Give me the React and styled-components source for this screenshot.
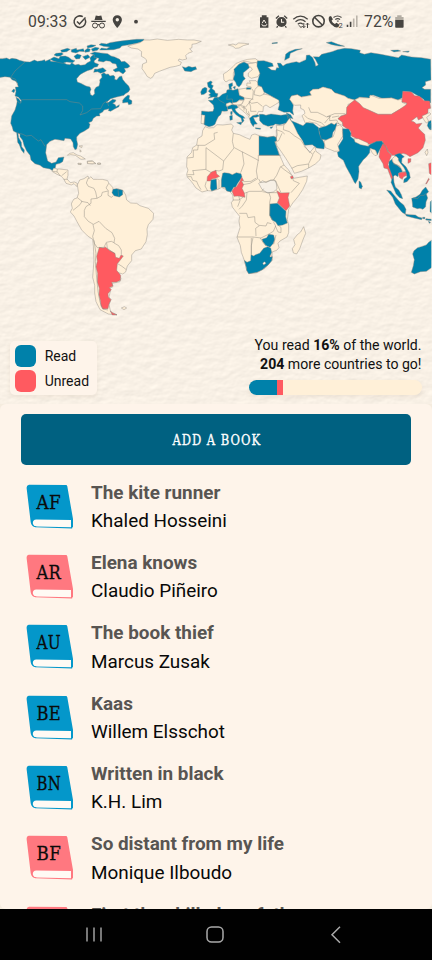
import React from "react";
import styled, { createGlobalStyle } from "styled-components";

const Global = createGlobalStyle`
  * { box-sizing: border-box; }
  html, body { margin: 0; padding: 0; background: #fef4ea; overflow: hidden; }
  body { font-family: Roboto, "Liberation Sans", sans-serif; color: #111; }
`;

const BLUE = "#0081aa";
const RED = "#ff5a60";
const LAND = "#fff0d8";

const Screen = styled.div`
  width: 432px;
  height: 960px;
  display: flex;
  flex-direction: column;
  overflow: hidden;
  background: #f5ecdf;
`;

const Hero = styled.section`
  display: grid;
  grid-template: 404px / 432px;
  flex: none;
  background: #f8f0e5;
`;

const MapSvg = styled.svg`
  grid-area: 1 / 1;
  display: block;
`;

const HeroContent = styled.div`
  grid-area: 1 / 1;
  z-index: 1;
  display: flex;
  flex-direction: column;
  justify-content: space-between;
`;

const StatusBar = styled.header`
  display: flex;
  justify-content: space-between;
  align-items: center;
  height: 44px;
  padding: 0 28px;
  color: #464440;
`;

const StatusSide = styled.div`
  display: flex;
  align-items: center;
`;

const StatusText = styled.span`
  width: ${(p) => p.$w}px;
  font-size: 15.8px;
  line-height: 20px;
  white-space: nowrap;
`;

const HeroFooter = styled.div`
  display: flex;
  justify-content: space-between;
  align-items: flex-end;
  padding: 0 10.5px 9px 10px;
`;

const Legend = styled.div`
  width: 87px;
  height: 54px;
  padding: 4px 4.7px;
  display: flex;
  flex-direction: column;
  gap: 3.6px;
  border-radius: 5px;
  background: #fef4ea;
  box-shadow: 0 2px 5px rgba(120, 90, 50, 0.09);
`;

const LegendItem = styled.div`
  display: flex;
  align-items: center;
  gap: 8.6px;
  font-size: 14px;
  line-height: 21.6px;
`;

const LegendLabel = styled.span`
  padding-top: 1px;
  height: 21.6px;
`;

const Swatch = styled.i`
  width: 21.4px;
  height: 21.6px;
  border-radius: 6px;
  background: ${(p) => p.$color};
`;

const Progress = styled.div`
  text-align: right;
  font-size: 14.1px;
  line-height: 19px;
  white-space: nowrap;
`;

const Track = styled.div`
  display: flex;
  width: 172.6px;
  height: 15px;
  margin: 6.5px 0 0 auto;
  border-radius: 8px;
  overflow: hidden;
  background: ${LAND};
  box-shadow: 0 2px 5px rgba(120, 90, 50, 0.09);
`;

const Segment = styled.div`
  width: ${(p) => p.$w}px;
  background: ${(p) => p.$color};
`;

const Panel = styled.main`
  height: 505px;
  flex: none;
  padding: 10px 21px 0;
  overflow: hidden;
  border-radius: 6px;
  background: #fef4ea;
`;

const AddButton = styled.button`
  display: flex;
  align-items: center;
  justify-content: center;
  width: 390px;
  height: 51px;
  padding: 0;
  border: 0;
  border-radius: 5px;
  background: #006181;
`;

const List = styled.ul`
  margin: 12.5px 0 0;
  padding: 0;
  list-style: none;
`;

const Row = styled.li`
  display: flex;
  gap: 17px;
  height: 70.35px;
  padding: 6px 0 0 5px;
`;

const RowText = styled.div`
  display: flex;
  flex-direction: column;
  font-size: 18.9px;
  line-height: 28.4px;
  margin-top: -4.8px;
  white-space: nowrap;
`;

const Title = styled.strong`
  font-weight: 700;
  color: #585552;
`;

const Author = styled.span`
  color: #080808;
`;

const NavBar = styled.nav`
  display: flex;
  justify-content: space-between;
  align-items: center;
  height: 51px;
  flex: none;
  padding: 0 87px 0 85px;
  background: #010101;
`;

const slab = '"DejaVu Serif", "Liberation Serif", serif';

/* Every tile of the map is digitised at three units per pixel from its own origin. */
const tiles = [
  {
    at: [0, 36],
    shapes: [
      [BLUE, "M-5 68L8 68L20 66L28 70L36 67L50 69L58 73L75 77L90 78L103 72L112 76L125 74L134 71L136 76L150 70L152 76L165 77L175 75L188 79L200 85L210 86L215 80L225 87L235 85L242 88L255 86L262 80L272 75L270 66L275 60L285 54L288 60L290 68L282 75L284 80L296 85L292 92L283 94L276 100L262 104L250 110L240 116L230 128L232 138L242 142L258 150L270 153L273 160L270 168L272 176L278 179L284 173L283 162L288 154L297 150L300 138L299 132L306 124L304 115L312 110L318 115L325 114L330 120L340 118L345 122L344 130L350 132L358 122L365 120L368 130L376 140L386 150L390 160L386 167L375 174L372 178L350 183L332 188L318 200L326 199L338 190L348 192L345 198L338 202L346 206L348 212L358 206L357 212L345 218L332 226L325 224L327 218L312 222L308 228L298 233L300 240L290 240L280 247L276 256L266 260L270 265L267 276L252 286L240 292L230 303L230 312L233 325L230 339L225 341L220 332L219 320L212 309L195 307L192 314L180 312L165 310L150 316L140 326L137 350L143 375L155 382L168 378L175 365L192 363L188 377L180 382L168 385L166 395L159 405L150 399L130 395L120 388L105 383L93 372L90 358L80 345L72 328L68 313L60 302L60 295L54 292L56 305L64 319L65 332L73 342L72 352L64 342L58 326L53 319L50 290L40 285L36 271L32 262L35 240L45 222L50 205L52 193L61 201L64 194L56 184L45 180L48 166L46 153L55 153L52 141L46 135L36 131L30 124L15 122L-5 125Z"],
      [BLUE, "M150 70L162 63L177 68L180 61L196 60L206 64L215 71L225 74L218 80L200 78L188 82L174 79L162 76Z"],
      [BLUE, "M162 57L168 52L185 50L190 54L181 60L170 61ZM182 43L202 37L211 40L200 47L185 49ZM214 41L229 37L231 42L250 38L254 47L239 46L228 51L214 48ZM222 61L232 54L244 58L239 68L228 69ZM255 43L263 37L271 40L268 47L255 49ZM248 62L264 56L270 64L256 71ZM261 30L273 26L288 28L279 33L263 36ZM274 39L286 34L298 36L292 43L278 46Z"],
      [BLUE, "M432 10L410 10L380 13L355 16L330 20L320 24L304 22L297 26L310 31L329 33L320 38L304 36L299 42L315 42L341 41L360 36L365 30L382 27L410 22L430 16Z"],
      [BLUE, "M271 53L284 48L302 51L323 53L333 60L344 63L359 70L364 77L374 76L385 85L390 91L383 96L373 97L377 106L369 114L357 106L346 108L339 102L352 95L348 84L337 82L330 76L318 74L310 78L294 75L297 67L282 64L284 57ZM292 100L309 95L319 104L312 109L302 112L293 107L281 109L284 99Z"],
      [BLUE, "M368 193L374 185L384 177L389 179L387 189L396 194L395 204L386 206L383 199L368 201ZM35 166L41 159L45 162L42 170ZM48 184L56 188L64 199L59 202L51 194Z"],
      [LAND, "M202 358L208 352L220 350L231 357L242 360L256 369L243 370L226 358L212 356ZM262 375L276 374L287 382L277 384L262 382ZM234 382l10 1l-1 3l-8 -2ZM293 382h9v3h-9ZM237 330l10 -1l-2 6ZM240 341l4 5l-4 2Z"],
    ],
    borders: "M76 77L45 105L32 124L47 130L53 148M64 191H200L210 197L238 201L248 210L248 224L240 237L260 230L275 219L302 218L310 202L321 195L326 210M51 291L66 294L79 300L94 298L106 308L115 315L123 311L135 331",
  },
  {
    at: [144, 36],
    shapes: [
      [LAND, "M-49 30L-30 25L-12 20L0 12L18 12L40 9L70 13L104 10L130 12L150 12L172 16L156 23L144 25L144 35L137 38L145 47L132 52L125 59L128 69L115 72L105 69L103 74L112 79L109 87L95 91L78 94L62 100L46 106L32 112L27 122L20 127L10 122L2 109L-6 98L-4 84L8 79L7 71L0 65L-8 61L-7 47L-18 39L-38 36Z"],
      [LAND, "M253 27L267 24L275 27L284 21L302 22L315 24L298 29L285 36L274 37L267 31Z"],
      [BLUE, "M115 92L125 95L134 91L144 94L155 92L158 100L149 103L141 107L122 105L119 99Z"],
      [BLUE, "M190 140L200 135L205 138L201 145L208 149L204 158L212 164L214 171L222 173L219 183L207 183L192 187L200 180L194 177L200 172L193 166L199 158L192 152ZM175 158L183 154L189 157L188 169L180 175L172 176L170 168Z"],
      [LAND, "M238 114L248 108L259 99L268 91L275 83L291 76L311 70L334 68L345 76L339 81L323 80L311 77L299 77L285 85L275 99L268 111L268 133L255 132L246 138L240 132Z"],
      [LAND, "M311 83L325 82L337 79L343 89L346 102L348 112L342 122L322 127L313 121L313 111L325 101L321 94L313 91Z"],
      [BLUE, "M268 130L272 115L270 100L285 85L300 78L312 84L316 95L307 103L298 110L298 120L304 128L297 134L292 145L285 153L278 148L275 139Z"],
      [BLUE, "M254 145L265 140L266 149L261 153L264 160L256 160ZM267 154L274 151L273 160ZM384 21L400 19L400 22L384 23Z"],
      [BLUE, "M193 193L206 193L212 184L225 184L235 175L247 170L249 162L258 160L267 163L282 158L286 177L300 183L301 191L286 191L280 197L265 204L250 203L246 209L250 214L251 225L240 226L234 225L230 236L223 242L218 252L213 265L206 269L195 272L182 267L178 262L182 240L172 236L173 225L193 227L207 226L210 217L208 207Z"],
      [LAND, "M173 236L183 238L180 264L171 262Z"],
      [LAND, "M246 203L258 199L268 205L260 211L247 210ZM264 200L277 199L286 193L299 194L293 206L278 207L266 205Z"],
      [LAND, "M284 160L310 156L321 158L322 153L308 150L309 141L320 142L316 134L336 134L342 141L342 150L355 152L363 163L359 174L378 178L388 184L404 188L406 198L395 205L378 215L366 207L358 212L357 227L344 226L339 235L329 239L326 248L318 253L314 240L300 228L286 216L280 211L294 204L301 190L300 184L286 178Z"],
      [BLUE, "M308 155L320 155L320 160L307 160Z"],
      [BLUE, "M250 212L263 206L278 208L282 215L273 219L276 226L286 235L298 241L303 247L297 246L300 254L295 260L291 246L277 237L266 225L263 218L251 220ZM278 260L294 258L291 266ZM257 240L265 238L265 251L258 253ZM260 227L265 226L264 236L260 235Z"],
      [BLUE, "M317 247L326 239L341 236L347 240L337 244L328 244L333 255L340 264L331 265L328 272L320 260ZM334 275L350 277L349 280L335 278ZM378 274L387 272L381 278Z"],
      [BLUE, "M346 235L357 235L366 238L381 234L397 236L411 238L430 235L439 244L440 260L425 262L407 266L394 264L388 268L372 271L357 265L347 254Z"],
    ],
    borders: "M285 177L300 186L318 188L328 190M323 158L328 165L326 188L316 196M343 150L333 160L330 176L348 180L361 174M315 196L323 202L340 199L355 211M283 211L292 208L304 214L319 196M292 212L307 219L307 229L315 237M315 197L320 212L320 226L337 226M300 209L300 224M313 226L317 240M220 185L226 193L242 202M250 178L248 190L265 189L266 201M182 241L182 264",
  },
  {
    at: [288, 36],
    shapes: [
      [BLUE, "M-92 75L-72 74L-47 82L-44 91L-61 94L-49 102L-37 103L-34 95L-27 96L-32 81L-22 82L-15 90L-6 84L10 80L25 77L34 80L54 71L55 58L64 57L74 65L81 80L83 91L91 87L82 70L76 62L93 63L101 55L132 47L148 41L170 37L190 38L217 43L215 50L229 55L249 50L278 55L300 59L331 65L341 57L370 63L400 65L428 70L429 132L412 137L413 147L402 155L410 160L428 160L428 200L421 199L415 205L407 190L395 182L370 168L346 166L343 185L330 192L310 185L285 188L255 177L244 180L248 187L215 183L200 192L180 187L170 180L140 170L130 160L105 153L92 159L75 160L65 168L70 178L40 183L28 176L10 180L5 190L12 200L16 208L14 224L17 237L5 228L-12 229L-30 221L-26 207L-27 193L-54 178L-72 168L-79 152L-90 148L-91 136L-84 112L-93 91Z"],
      [BLUE, "M115 20L130 17L150 25L170 31L152 30L132 26ZM308 43L330 42L338 45L318 48ZM344 47L364 45L361 49ZM-10 73L-7 55L3 47L22 40L43 38L27 43L7 52L4 65ZM-6 230L8 236L15 248L6 245Z"],
      [LAND, "M5 190L10 180L28 176L40 183L70 178L65 168L75 160L92 159L105 153L130 160L140 170L170 180L180 187L200 192L196 201L180 205L180 226L175 235L158 240L150 248L164 254L165 269L150 262L140 268L130 262L120 268L109 274L96 270L85 262L65 258L52 262L47 250L42 239L51 232L48 222L38 217L38 207L20 208L14 202Z"],
      [LAND, "M200 191L215 185L244 186L247 177L273 187L310 186L330 192L343 189L342 199L356 205L348 215L334 221L310 235L270 235L240 222L222 215L214 203Z"],
      [RED, "M344 166L370 168L380 179L395 181L408 194L425 195L428 217L420 219L420 230L408 244L391 252L387 242L370 255L379 258L385 264L402 262L391 276L399 285L410 295L412 313L405 335L390 350L366 362L355 355L345 352L330 358L312 358L300 345L294 330L289 329L283 316L265 318L245 325L220 319L202 306L190 300L188 285L177 278L165 270L163 259L150 248L158 241L175 235L176 214L187 202L200 192L215 203L226 215L240 221L270 235L310 235L335 220L355 206L356 201L342 198ZM360 368L369 368L368 378L360 382Z"],
      [BLUE, "M-3 238L10 254L28 262L45 269L55 260L75 262L92 275L94 292L110 325L108 339L86 336L73 326L50 328L38 315L23 305L16 287L16 275L3 258Z"],
      [BLUE, "M92 277L104 273L115 270L130 262L139 266L146 260L145 275L135 289L132 304L115 312L100 310L95 295Z"],
      [LAND, "M108 315L135 303L142 283L144 271L155 267L165 275L163 286L165 299L149 325L155 345L140 346L112 335Z"],
      [BLUE, "M164 278L182 279L189 292L188 302L198 310L213 316L223 322L241 330L247 325L266 316L281 315L287 323L276 340L268 356L264 345L246 337L245 350L235 363L226 371L212 391L213 407L210 429L202 443L198 437L188 417L175 394L166 373L151 362L148 349L155 345L151 331L165 309Z"],
      [LAND, "M198 308L211 308L240 321L241 331L218 326L201 318ZM246 337L262 342L268 357L261 359L253 351Z"],
      [RED, "M284 323L294 330L299 346L311 358L306 369L300 386L309 402L316 422L315 437L309 426L299 399L288 396L285 383L273 363L276 342Z"],
      [LAND, "M402 240L425 230L429 234L416 244L422 256L415 261L408 252ZM418 339L420 350L416 359L411 349Z"],
      [BLUE, "M421 257L430 253L432 276L424 280L418 269ZM426 263h8v18h-8Z"],
    ],
    borders: "M-2 262L12 288L22 309M50 238L59 247L77 253L100 260L110 270M62 214L68 229L88 229L105 237L116 243L128 240L120 249L110 261M117 242L140 233L172 233M125 240L125 254L146 252L152 264M132 244L153 240M283 324L295 335L301 349",
  },
  {
    at: [40, 160],
    shapes: [
      [LAND, "M36 34L41 24L52 27L59 27L84 30L84 46L81 57L91 68L103 66L112 70L111 80L102 71L94 75L78 70L72 58L64 49L51 43Z"],
      [LAND, "M112 75L119 60L132 56L144 48L147 56L152 50L160 58L172 58L187 58L203 62L207 70L218 82L219 89L234 87L249 91L257 105L260 120L272 129L290 130L300 137L325 145L341 160L339 178L325 194L321 207L322 224L318 245L304 267L286 272L275 285L275 302L262 318L257 336L248 342L235 338L243 355L240 365L216 370L219 380L206 387L211 394L207 411L213 419L207 434L212 455L231 465L205 462L180 449L168 425L164 399L164 376L158 352L162 300L160 258L158 238L143 228L125 210L111 185L102 168L91 156L97 145L94 132L97 125L102 117L111 114L116 100Z"],
      [RED, "M178 262L190 264L196 261L208 271L225 280L227 292L238 295L243 285L250 288L241 300L232 311L230 331L242 346L241 361L230 366L215 367L219 378L208 383L214 389L204 401L205 411L213 419L207 432L204 446L189 447L183 438L181 421L177 405L178 385L172 366L173 340L168 320L172 304L170 289ZM211 453L218 459L231 464L217 465Z"],
      [BLUE, "M219 88L230 86L248 91L248 104L238 111L222 107L216 98Z"],
      [LAND, "M244 444l9 -4l7 4l-8 5ZM114 10h9v3h-9ZM142 5l16 -1l9 7l-24 0ZM173 9h8v3h-8Z"],
    ],
    borders: "M145 54L139 69L145 79L162 85L167 96L171 115L153 117L153 130L138 140L133 151L133 170L145 184L160 193L177 184L197 205L216 218L224 235L222 249L236 257L244 270L244 284M112 113L126 124L120 134L108 144L99 151M124 124L144 128L151 137M206 70L198 84L205 92L204 106L214 112L219 108M204 93L187 97L184 108L171 115M234 88L236 108M159 193L163 212L158 229L163 250L172 263L192 262L199 247L214 244L222 248M200 249L202 265L224 281M162 241L168 281L166 305L169 343L174 394L180 426L188 447L204 450M233 311L246 319L259 329M39 34L52 36L61 48M52 27L51 36M65 47L80 35M71 58L82 58",
  },
  {
    at: [180, 120],
    shapes: [
      [LAND, "M290 26L289 16L304 17L316 12L328 -5L340 12L353 40L368 62L374 77L389 98L405 79L408 94L423 105L420 119L406 132L386 144L364 154L343 160L337 147L318 116L308 101L291 77L286 61L292 45Z"],
      [LAND, "M75 20L86 24L101 23L111 14L129 15L154 12L160 18L155 30L160 40L178 44L195 52L210 58L215 45L225 42L240 48L262 52L280 49L288 52L290 62L284 62L291 84L299 106L305 119L312 135L325 149L335 165L340 175L358 172L382 168L380 184L368 209L354 230L339 248L326 268L324 284L322 299L326 315L326 338L321 351L300 363L294 370L297 383L290 391L276 396L277 420L255 445L230 458L207 461L200 451L193 421L184 397L181 377L171 352L180 323L177 303L179 289L166 273L157 261L154 248L160 240L158 225L150 215L125 202L114 208L95 213L82 212L66 216L48 204L36 187L22 171L20 163L24 150L20 140L21 111L34 98L38 83L50 75L53 56L66 48L68 32Z"],
      ["#f7f0e5", "M236 190L248 182L258 188L272 180L288 183L291 207L280 216L262 219L246 208Z"],
      [BLUE, "M237 48L262 52L280 49L288 52L290 62L284 65L298 106L237 106Z"],
      [RED, "M81 183L82 170L94 156L108 151L110 162L119 169L107 175L95 177L92 183Z"],
      [BLUE, "M93 180L109 177L111 207L95 213L91 205Z"],
      [BLUE, "M124 201L124 180L128 160L133 158L147 160L157 164L169 158L183 161L186 171L180 180L173 190L167 201L161 202L153 216L140 213L135 202Z"],
      [RED, "M185 171L191 182L185 183L191 194L186 205L193 219L195 232L175 228L162 229L156 213L164 202L170 200L180 184Z"],
      [RED, "M290 212L302 219L328 218L324 232L329 258L318 272L292 248L298 234Z"],
      [BLUE, "M270 252L292 250L318 274L317 290L322 309L308 315L294 317L287 306L276 300L269 286Z"],
      [BLUE, "M246 358L260 353L266 343L281 345L284 358L280 370L270 382L257 376L249 365Z"],
      [BLUE, "M193 421L201 427L212 422L213 404L221 408L227 404L239 400L251 385L263 380L272 384L275 397L270 409L277 410L275 422L265 434L247 449L231 457L206 461L200 451L199 442Z"],
      ["#fff7ec", "M248 429L254 425L258 430L251 435ZM270 406h4v5h-4Z"],
      [RED, "M331 170L338 167L340 174L334 177Z"],
      [LAND, "M371 320L377 340L369 359L359 387L350 402L340 399L337 386L345 374L341 358L352 344L362 336Z"],
    ],
    borders: "M50 76H75L104 58L102 40L113 37M160 40L157 64L162 84L131 123L78 83V148L39 152M55 76L53 90H40V112L22 114M131 123L128 149L117 153L106 151M163 83L187 96L192 132L182 158M186 95L235 121V105M235 120L229 153L233 176L210 190L188 194M190 185L213 184L229 174M237 106H302M236 177L242 188L259 185L281 179L290 166L301 141L312 135M302 140L313 149L334 164M282 178L290 190L303 218M333 218L358 190L340 182L338 174M77 148L94 158M38 150L42 164H22M23 170H34L38 181L50 184L55 196L63 209M79 184L75 198L83 213M111 175L117 181V207M193 220L209 214H245L251 206M247 215L266 218H292M267 219L272 233L269 247L269 286L278 300M176 228L180 242L173 260M158 240H177L190 231M201 217L199 240L187 258L177 268M178 280H200L204 293L224 290L225 307L238 317L227 325L228 348M171 351H219L243 354L265 343L280 334L287 318L280 305M238 316L258 318L262 308L274 311M214 404V354M219 353L214 377V404M241 354L249 367L258 378M286 318L294 336L303 338V322L296 317M288 345L281 373M335 145L352 137L386 132L386 144M386 131L399 104M371 78L398 103L405 93M312 12L310 29L328 35L344 48L362 59L372 75M289 29L306 35L314 42M289 30V63M306 40L296 62L289 65",
  },
  {
    at: [320, 80],
    shapes: [
      [BLUE, "M117 303L122 306L127 319L124 327L117 323Z"],
      [BLUE, "M207 245L215 238L220 249L231 255L244 266L247 276L236 279L234 290L225 285L220 290L222 307L226 321L237 331L244 344L248 356L239 353L228 341L218 318L213 307L218 292L207 262Z"],
      [BLUE, "M224 225L234 221L240 220L253 230L246 235L245 248L258 260L268 278L271 293L261 305L251 308L252 298L261 291L256 274L244 258L236 242Z"],
      [LAND, "M217 236L223 230L228 228L235 235L235 242L251 262L257 273L249 276L240 259L226 252L219 247Z"],
      [RED, "M235 280L244 277L258 276L260 286L250 291L247 298L239 293Z"],
      [BLUE, "M200 330L212 333L226 350L240 366L251 375L258 388L256 403L246 397L226 372L218 352ZM256 402L267 404L286 405L295 411L306 414L305 419L282 414L259 408ZM308 412h7v4h-7ZM318 416L336 418V422L317 420ZM325 424L332 427L328 430Z"],
      [BLUE, "M275 355L288 351L300 343L307 331L317 321L326 335L319 342L323 354L318 366L317 380L309 388L300 385L292 386L278 381L277 368Z"],
      [BLUE, "M331 365L336 360V400L330 395ZM336 480L326 487L319 495L304 500L293 503L282 512L278 522L283 539L280 557L274 577L283 582L301 575L319 574L336 562Z"],
      [RED, "M326 251L334 248V285L328 280ZM317 312L326 295L328 297L320 311Z"],
    ],
    borders: "M280 355L293 356L301 346L312 346L319 340M220 252L233 256L240 261",
  },
];

const WorldMap = () => (
  <MapSvg width="432" height="404" viewBox="0 0 432 404">
    <defs>
      <filter id="paper" x="0" y="0" width="100%" height="100%" colorInterpolationFilters="sRGB">
        <feTurbulence type="fractalNoise" baseFrequency="0.09 0.15" numOctaves="3" seed="8" />
        <feDiffuseLighting lightingColor="#f9f1e6" surfaceScale="0.2" diffuseConstant="1.13">
          <feDistantLight azimuth="60" elevation="62" />
        </feDiffuseLighting>
      </filter>
      <clipPath id="mapArea"><rect width="431.3" height="330" /></clipPath>
    </defs>
    <rect width="432" height="404" filter="url(#paper)" />
    <g clipPath="url(#mapArea)">
      {tiles.map(({ at, shapes, borders }) => (
        <g key={at.join()} transform={`translate(${at[0]} ${at[1]}) scale(.33333)`} strokeLinejoin="round">
          {shapes.map(([fill, d]) => (
            <path key={d} d={d} fill={fill} stroke="#8c8880" strokeWidth="1.3" />
          ))}
          <path d={borders} fill="none" stroke="#8c8880" strokeWidth="1.4" />
        </g>
      ))}
    </g>
  </MapSvg>
);

const LeftIcons = () => (
  <svg width="70" height="20" viewBox="72 12 70 20" fill="none" stroke="#464440">
    <path d="M85.2 19.4a5.8 5.8 0 1 1-2.4-2.7M77 21.5l2.5 2.5 6-6.5" strokeWidth="1.5" />
    <path d="M94.5 20l1.3-4.6 2.7.7 2.8-.7 1.2 4.6z" fill="#464440" stroke="none" />
    <path d="M91.3 21.4h14.4M97.5 25q1-.7 2 0" strokeWidth="1.2" />
    <circle cx="95" cy="25.5" r="2.5" strokeWidth="1" />
    <circle cx="102" cy="25.5" r="2.5" strokeWidth="1" />
    <path d="M117.3 15.2a4.6 4.6 0 0 0-4.6 4.6c0 3.4 4.6 8.2 4.6 8.2s4.6-4.8 4.6-8.2a4.6 4.6 0 0 0-4.6-4.6zm0 2.9a1.7 1.7 0 1 1 0 3.4 1.7 1.7 0 0 1 0-3.4z" fill="#464440" fillRule="evenodd" stroke="none" />
    <circle cx="136" cy="21.7" r="1.9" fill="#464440" stroke="none" />
  </svg>
);

const RightIcons = () => (
  <svg width="105" height="20" viewBox="259.5 12 105 20" fill="none" stroke="#464440">
    <path d="M260.5 17.2h1.8v-2h4.8v2h1.8v10.6h-8.4z" fill="#464440" stroke="none" />
    <path d="M262.7 23.2l1.8-3.2 2 3.2M262.3 24.2l1 1.6h3.1l1-1.6" stroke="#f8f0e5" strokeWidth="1" />
    <circle cx="282" cy="22" r="5.1" fill="#464440" stroke="none" />
    <path d="M276.4 18.5l3-2.7M284.7 15.8l3 2.7M278.3 26.2l-1.2 1.4M285.7 26.2l1.2 1.4" strokeWidth="1.3" />
    <path d="M282 19v3.3h2.7" stroke="#f8f0e5" strokeWidth="1.1" />
    <path d="M293.8 19.2q7.2-6 14.4 0M296 21.8q5-4.2 10 0M298.3 24.2q2.7-2 5 0" strokeWidth="1.3" />
    <path d="M299.5 25.3l2 2.3 1-1.3M304.3 23v4.5m-1.5-1.4l1.5 1.6 1.5-1.6M308 28v-4.8m-1.5 1.5l1.5-1.6 1.5 1.6" strokeWidth="1" />
    <circle cx="319" cy="21.2" r="5.7" strokeWidth="1.6" />
    <path d="M315 17.2l8 8" strokeWidth="1.6" />
    <path d="M329.5 16.8l2-.8 1.9 3.2-1.3 1.5q1 2.3 3.3 3.3l1.6-1.2 2.9 2-1 2.3q-3.5 1.2-7.3-2.8-3.3-3.7-2.1-7.5z" fill="#464440" stroke="none" />
    <path d="M334 17.5q4-3 8 0M335.8 19.5q2.4-1.7 4.8 0M337.4 21.3q1-.5 1.8 0" strokeWidth="1.1" />
    <text x="339" y="27.8" fontSize="7.5" fontFamily="Roboto" fill="#464440" stroke="none">2</text>
    <path d="M348 27v-2.2M351.1 27v-5.2" strokeWidth="1.6" />
    <path d="M354.2 27v-8.4M357.3 27V15.5" stroke="#bbb4aa" strokeWidth="1.6" />
  </svg>
);

const Battery = () => (
  <svg width="9" height="20" viewBox="395 12 9 20">
    <path d="M395.2 17h2v-1.8h4.4V17h2v3h-8.4z" fill="#b3ada3" />
    <path d="M395.2 20h8.4v7q0 .8-.8.8h-6.8q-.8 0-.8-.8z" fill="#464440" />
  </svg>
);

const Book = ({ code, read }) => (
  <svg width="48" height="46" viewBox="0 0 48 46">
    <path d="M3 .8L40 1.1Q41 1.2 41.3 2.2L47 35v8.2l-1 .2.2 1.1L9.5 43.2Q5.6 42.5 4.7 38.2L.6 4Q.5 1.2 3 .8z" fill={read ? "#0497ca" : "#ff7880"} />
    <path d="M10.3 35.6Q6.8 36 6.8 39T11 42.4L45 43.2V36z" fill="#fffaf4" />
    <text x="10.5" y="25" fontFamily={slab} fontSize="19.3" letterSpacing=".4" textLength="24.6" lengthAdjust="spacingAndGlyphs" fill="#0b0b0b" stroke="#0b0b0b" strokeWidth=".3">{code}</text>
  </svg>
);

const ButtonLabel = () => (
  <svg width="130" height="36" viewBox="-20 -6 130 36">
    <text x="1.4" y="17.4" fontFamily={slab} fontSize="15.4" letterSpacing="1.3" textLength="88.6" lengthAdjust="spacingAndGlyphs" fill="#fff" stroke="#fff" strokeWidth=".35">ADD A BOOK</text>
  </svg>
);

const books = [
  ["AF", "The kite runner", "Khaled Hosseini", true],
  ["AR", "Elena knows", "Claudio Piñeiro", false],
  ["AU", "The book thief", "Marcus Zusak", true],
  ["BE", "Kaas", "Willem Elsschot", true],
  ["BN", "Written in black", "K.H. Lim", true],
  ["BF", "So distant from my life", "Monique Ilboudo", false],
  ["KH", "First they killed my father", "Loung Ung", false],
];

export default function App() {
  return (
    <Screen>
      <Global />
      <Hero>
        <WorldMap />
        <HeroContent>
          <StatusBar>
            <StatusSide>
              <StatusText $w={44}>09:33</StatusText>
              <LeftIcons />
            </StatusSide>
            <StatusSide>
              <RightIcons />
              <StatusText $w={31}>72%</StatusText>
              <Battery />
            </StatusSide>
          </StatusBar>
          <HeroFooter>
            <Legend>
              <LegendItem><Swatch $color={BLUE} /><LegendLabel>Read</LegendLabel></LegendItem>
              <LegendItem><Swatch $color={RED} /><LegendLabel>Unread</LegendLabel></LegendItem>
            </Legend>
            <Progress>
              <div>You read <b>16%</b> of the world.</div>
              <div><b>204</b> more countries to go!</div>
              <Track>
                <Segment $w={27.6} $color={BLUE} />
                <Segment $w={6.4} $color={RED} />
              </Track>
            </Progress>
          </HeroFooter>
        </HeroContent>
      </Hero>
      <Panel>
        <AddButton aria-label="Add a book"><ButtonLabel /></AddButton>
        <List>
          {books.map(([code, title, author, read]) => (
            <Row key={code}>
              <Book code={code} read={read} />
              <RowText>
                <Title>{title}</Title>
                <Author>{author}</Author>
              </RowText>
            </Row>
          ))}
        </List>
      </Panel>
      <NavBar>
        <svg width="18" height="20" viewBox="0 0 18 20" stroke="#aaa" strokeWidth="1.4"><path d="M2 2.5v14M9 2.5v14M16 2.5v14" /></svg>
        <svg width="20" height="20" viewBox="0 0 20 20" fill="none" stroke="#aaa" strokeWidth="1.5"><rect x="2" y="2" width="16" height="15" rx="4.5" /></svg>
        <svg width="18" height="20" viewBox="0 0 18 20" fill="none" stroke="#aaa" strokeWidth="1.5"><path d="M13 1.8L5 9.8l8 8" /></svg>
      </NavBar>
    </Screen>
  );
}
